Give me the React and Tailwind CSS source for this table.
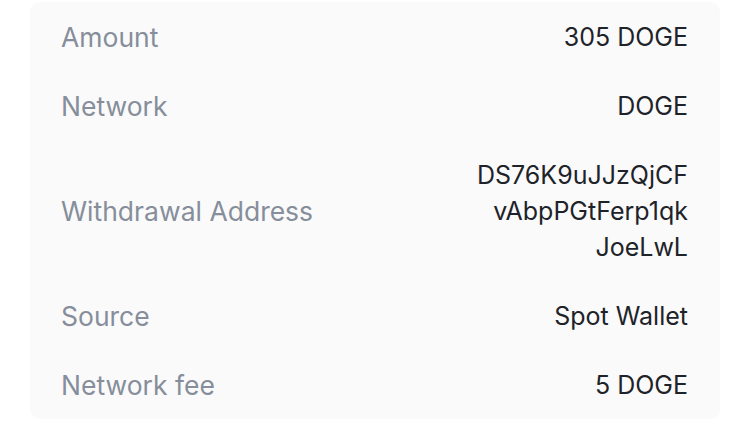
const rows = [
  { label: "Amount", value: ["305 DOGE"] },
  { label: "Network", value: ["DOGE"] },
  { label: "Withdrawal Address", value: ["DS76K9uJJzQjCF", "vAbpPGtFerp1qk", "JoeLwL"] },
  { label: "Source", value: ["Spot Wallet"] },
  { label: "Network fee", value: ["5 DOGE"] },
];

export default function App() {
  return (
    <div className="h-[426px] w-[750px] bg-white pl-[30px] pt-[2px] font-['Inter',sans-serif]">
      <div className="w-[690px] rounded-[10px] bg-[#fafafa] pl-[31px] pr-[32px]">
        {rows.map((row) => (
          <div key={row.label} className="flex items-center justify-between py-[16.5px] leading-[36px]">
            <span className="text-[26.5px] text-[#868e9b]">{row.label}</span>
            <span className="text-right text-[25px] text-[#1e2329]">
              {row.value.map((line) => (
                <span key={line} className="block">{line}</span>
              ))}
            </span>
          </div>
        ))}
      </div>
    </div>
  );
}
